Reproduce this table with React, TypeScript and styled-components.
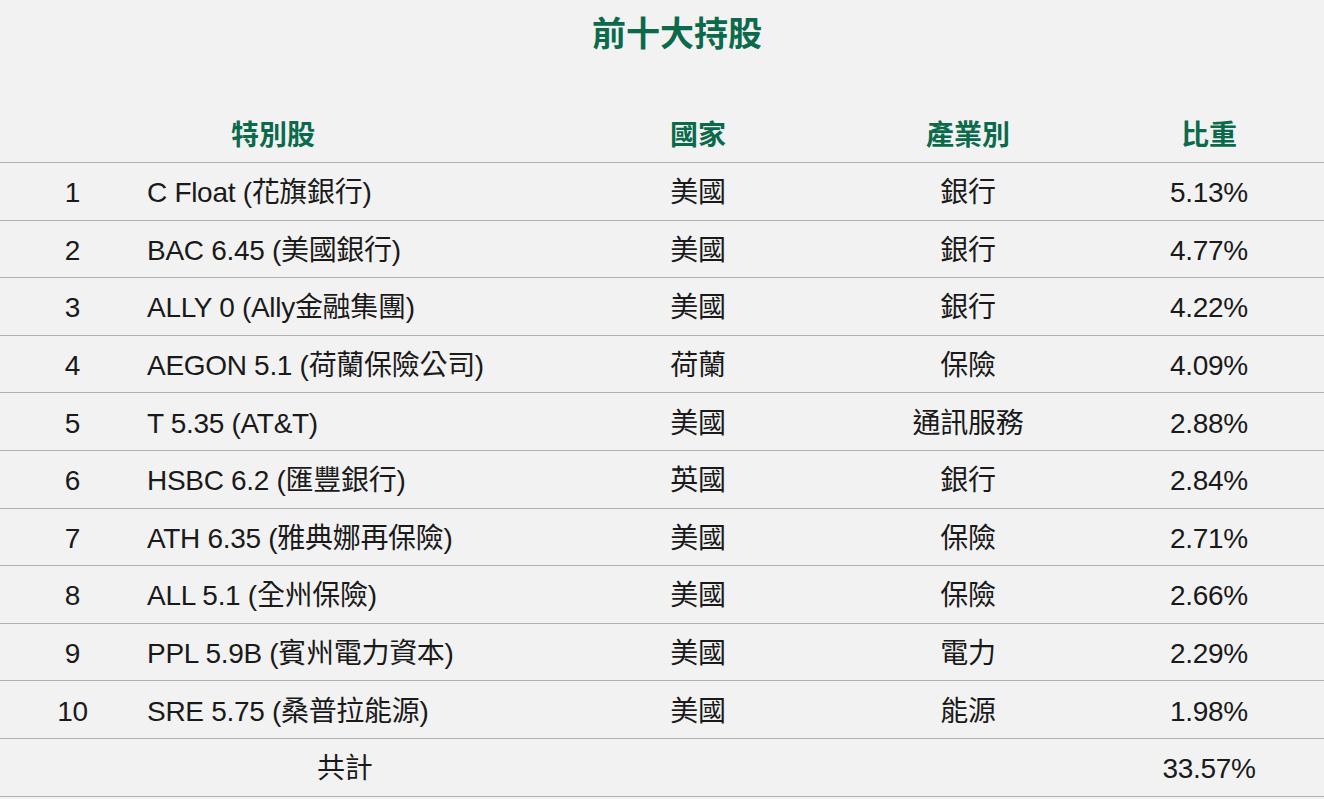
import React from 'react';
import styled, {createGlobalStyle} from 'styled-components';

type Holding = {
    rank: number;
    name: string;
    country: string;
    industry: string;
    weight: string;
};

const holdings: Holding[] = [
    {rank: 1, name: 'C Float (花旗銀行)', country: '美國', industry: '銀行', weight: '5.13%'},
    {rank: 2, name: 'BAC 6.45 (美國銀行)', country: '美國', industry: '銀行', weight: '4.77%'},
    {rank: 3, name: 'ALLY 0 (Ally金融集團)', country: '美國', industry: '銀行', weight: '4.22%'},
    {rank: 4, name: 'AEGON 5.1 (荷蘭保險公司)', country: '荷蘭', industry: '保險', weight: '4.09%'},
    {rank: 5, name: 'T 5.35 (AT&T)', country: '美國', industry: '通訊服務', weight: '2.88%'},
    {rank: 6, name: 'HSBC 6.2 (匯豐銀行)', country: '英國', industry: '銀行', weight: '2.84%'},
    {rank: 7, name: 'ATH 6.35 (雅典娜再保險)', country: '美國', industry: '保險', weight: '2.71%'},
    {rank: 8, name: 'ALL 5.1 (全州保險)', country: '美國', industry: '保險', weight: '2.66%'},
    {rank: 9, name: 'PPL 5.9B (賓州電力資本)', country: '美國', industry: '電力', weight: '2.29%'},
    {rank: 10, name: 'SRE 5.75 (桑普拉能源)', country: '美國', industry: '能源', weight: '1.98%'},
];

const GREEN = '#0b6a4b';

const GlobalStyle = createGlobalStyle`
    html, body {
        margin: 0;
        padding: 0;
        background: #f2f2f2;
    }

    body {
        font-family: "Liberation Sans", "Noto Sans CJK TC", sans-serif;
        color: #1a1a1a;
    }
`;

const App = () => {
    return (
        <Page>
            <GlobalStyle/>
            <Title>前十大持股</Title>
            <Table>
                <HeadRow>
                    <Cell/>
                    <Cell $indent={86}>特別股</Cell>
                    <Cell $align="center">國家</Cell>
                    <Cell $align="center">產業別</Cell>
                    <Cell $align="center">比重</Cell>
                </HeadRow>
                {holdings.map(h => (
                    <Row key={h.rank}>
                        <Cell $align="center">{h.rank}</Cell>
                        <Cell $indent={2}>{h.name}</Cell>
                        <Cell $align="center">{h.country}</Cell>
                        <Cell $align="center">{h.industry}</Cell>
                        <Cell $align="center">{h.weight}</Cell>
                    </Row>
                ))}
                <Row>
                    <Cell/>
                    <Cell $indent={172}>共計</Cell>
                    <Cell/>
                    <Cell/>
                    <Cell $align="center">33.57%</Cell>
                </Row>
            </Table>
        </Page>
    );
};

const Page = styled.div`
    width: 1324px;
    min-height: 100vh;
    background: #f2f2f2;
`;

const Title = styled.h1`
    margin: 0;
    padding: 14px 0 0 30px;
    height: 105.4px;
    box-sizing: border-box;
    text-align: center;
    font-size: 34px;
    line-height: 40px;
    font-weight: bold;
    color: ${GREEN};
`;

const Table = styled.div`
    display: flex;
    flex-direction: column;
`;

const Row = styled.div`
    display: grid;
    grid-template-columns: 145px 453px 200px 340px 142px;
    align-items: center;
    height: 57.6px;
    padding-top: 4px;
    box-sizing: border-box;
    border-bottom: 1px solid #b0b0b0;
    font-size: 28px;
    letter-spacing: -0.3px;
`;

const HeadRow = styled(Row)`
    font-weight: bold;
    color: ${GREEN};
    letter-spacing: 0;
`;

const Cell = styled.div<{ $align?: 'left' | 'center'; $indent?: number }>`
    text-align: ${p => p.$align ?? 'left'};
    padding-left: ${p => p.$indent ?? 0}px;
    white-space: nowrap;
    line-height: 1;
`;

export default App;
